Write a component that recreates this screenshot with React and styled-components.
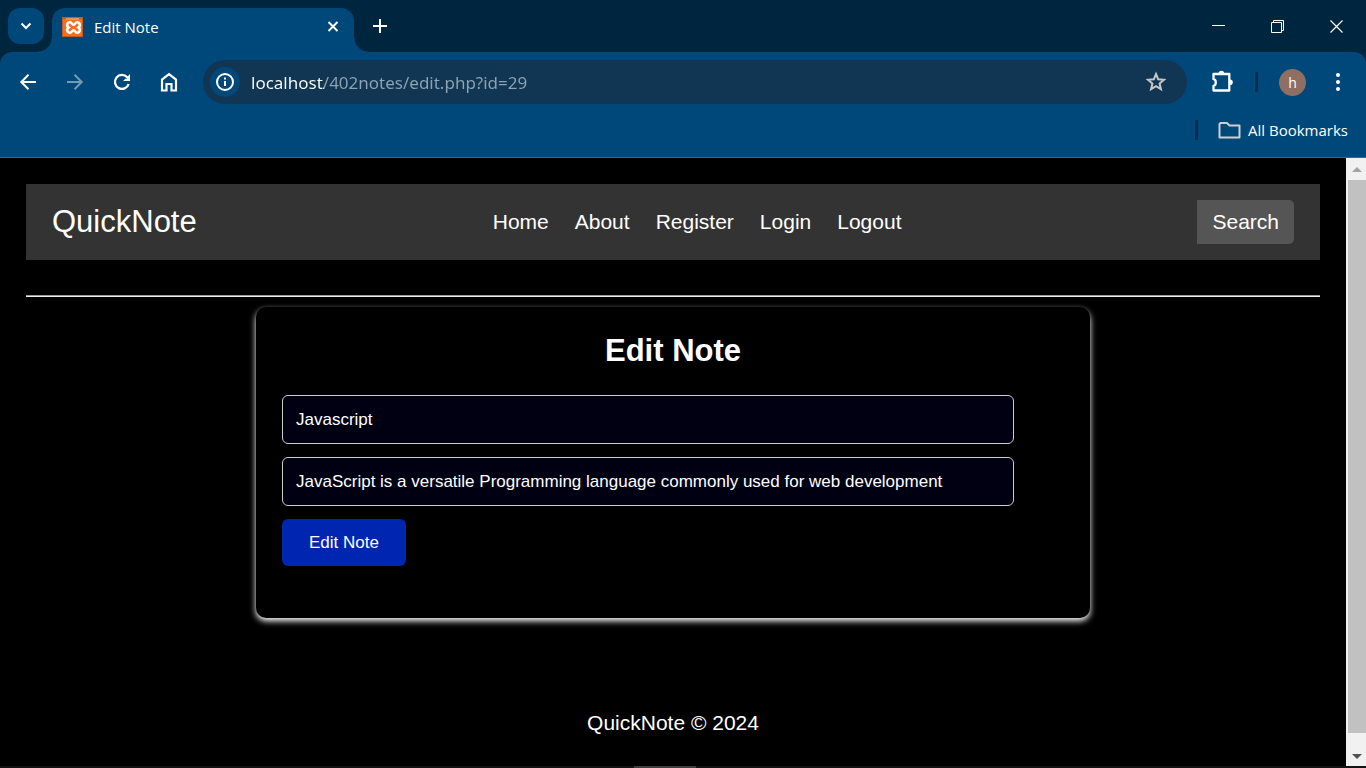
import React from "react";
import styled, { createGlobalStyle, css } from "styled-components";

const color = {
  frame: "#00253f",
  toolbar: "#00477a",
  omnibox: "#113654",
  separator: "#002c50",
  icon: "#ffffff",
};

const GlobalStyle = createGlobalStyle`
  *, *::before, *::after { box-sizing: border-box; }
  body { margin: 0; background: #000; color: #fff; }
  button, input { font: inherit; color: inherit; }
  button { border: 0; padding: 0; background: none; cursor: pointer; }
`;

const uiFont = css`
  font-family: "Open Sans", "Noto Sans", sans-serif;
`;

const Window = styled.div`
  display: flex;
  flex-direction: column;
  min-height: 100vh;
`;

/* ---------- browser frame ---------- */

const TabStrip = styled.div`
  ${uiFont}
  display: flex;
  height: 52px;
  padding: 8px 0 0 8px;
  background: ${color.frame};
`;

const TabSearch = styled.button`
  display: grid;
  place-items: center;
  width: 36px;
  height: 36px;
  margin-right: 8px;
  border-radius: 12px;
  background: ${color.toolbar};
`;

const Tab = styled.div`
  position: relative;
  display: flex;
  align-items: center;
  flex: 0 1 302px;
  height: 44px;
  padding: 0 10px 6px;
  border-radius: 13px 13px 0 0;
  background: ${color.toolbar};

  &::before,
  &::after {
    content: "";
    position: absolute;
    bottom: 0;
    width: 14px;
    height: 14px;
  }
  &::before {
    right: 100%;
    background: radial-gradient(circle at 0 0, transparent 13px, ${color.toolbar} 14px);
  }
  &::after {
    left: 100%;
    background: radial-gradient(circle at 100% 0, transparent 13px, ${color.toolbar} 14px);
  }
`;

const TabTitle = styled.span`
  flex: 1;
  margin-left: 11px;
  font-size: 15px;
  line-height: 20px;
`;

const SmallButton = styled.button`
  display: grid;
  place-items: center;
  width: 22px;
  height: 22px;
`;

const NewTab = styled.button`
  display: grid;
  place-items: center;
  width: 36px;
  height: 36px;
  margin-left: 8px;
`;

const WindowControls = styled.div`
  display: flex;
  margin-left: auto;
`;

const WindowButton = styled.button`
  display: grid;
  place-items: center;
  width: 59px;
  height: 36px;
`;

const ToolbarFrame = styled.div`
  background: ${color.frame};
`;

const Toolbar = styled.div`
  ${uiFont}
  display: flex;
  align-items: center;
  height: 60px;
  padding: 0 16px 0 4px;
  border-radius: 12px 12px 0 0;
  background: ${color.toolbar};
`;

const ToolButton = styled.button`
  display: grid;
  place-items: center;
  flex: none;
  width: ${(p) => p.$width || 47}px;
  height: 36px;
  opacity: ${(p) => (p.disabled ? 0.45 : 1)};
`;

const Omnibox = styled.div`
  display: flex;
  align-items: center;
  flex: 1;
  height: 44px;
  margin: 0 16px 0 11px;
  padding: 0 16px 0 7px;
  border-radius: 22px;
  background: ${color.omnibox};
`;

const SiteInfo = styled.button`
  display: grid;
  place-items: center;
  width: 30px;
  height: 30px;
  border-radius: 50%;
  background: ${color.toolbar};
`;

const UrlInput = styled.input`
  flex: 1;
  min-width: 0;
  height: 28px;
  margin-left: 11px;
  padding: 0;
  border: 0;
  outline: 0;
  font-family: "Noto Sans", sans-serif;
  font-size: 17px;
  background: linear-gradient(to right, #ffffff 73px, #8fa3b3 73px);
  background-clip: text;
  -webkit-text-fill-color: transparent;
`;

const Separator = styled.span`
  width: 3px;
  height: 20px;
  border-radius: 1px;
  background: ${color.separator};
`;

const Avatar = styled.button`
  width: 27px;
  height: 27px;
  margin: 0 20px 0 21px;
  border-radius: 50%;
  background: #8f6f63;
  font-size: 14px;
`;

const BookmarksBar = styled.div`
  ${uiFont}
  display: flex;
  align-items: center;
  justify-content: flex-end;
  height: 46px;
  padding: 0 18px 10px;
  border-bottom: 1px solid #2e6a9c;
  background: ${color.toolbar};
`;

const AllBookmarks = styled.button`
  display: flex;
  align-items: center;
  gap: 7px;
  margin-left: 19px;
  font-size: 15px;
  line-height: 20px;
`;

/* ---------- page ---------- */

const Viewport = styled.div`
  display: flex;
  flex: 1;
`;

const Page = styled.div`
  flex: 1;
  min-width: 0;
  padding: 26px;
  font-family: "Liberation Sans", Arial, sans-serif;
  font-size: 21px;
  line-height: 24px;
`;

const Header = styled.header`
  display: flex;
  align-items: center;
  justify-content: space-between;
  padding: 16px 26px;
  background: #333;
`;

const Brand = styled.a`
  color: #fff;
  font-size: 31px;
  line-height: 36px;
  text-decoration: none;
`;

const Nav = styled.nav`
  display: flex;
  gap: 26px;
`;

const NavLink = styled.a`
  color: #fff;
  text-decoration: none;
`;

const SearchButton = styled.button`
  height: 44px;
  padding: 0 15px;
  border-radius: 0 5px 5px 0;
  background: #555;
`;

const Rule = styled.hr`
  height: 2px;
  margin: 35px 0 10px;
  border: 0;
  border-top: 1px solid #9a9a9a;
  background: #eee;
`;

const Card = styled.main`
  max-width: 834px;
  margin: 0 auto;
  padding: 26px 26px 52px;
  border-radius: 10px;
  background: #000;
  box-shadow: 0 3px 6px #fff;
`;

const Title = styled.h1`
  margin: 0 0 26px;
  font-size: 31px;
  line-height: 36px;
  text-align: center;
`;

const Form = styled.form`
  display: flex;
  flex-direction: column;
  align-items: flex-start;
  gap: 13px;
  font-size: 17px;
`;

const Field = styled.input`
  box-sizing: content-box;
  width: 90%;
  height: 21px;
  padding: 13px;
  border: 1px solid #ccc;
  border-radius: 6px;
  background: #000013;
`;

const SubmitButton = styled.button`
  height: 47px;
  padding: 0 27px;
  border-radius: 6px;
  background: #0025b0;
`;

const Footer = styled.footer`
  margin-top: 93px;
  text-align: center;
`;

const ScrollTrack = styled.div`
  display: flex;
  flex-direction: column;
  width: 20px;
  padding-left: 2px;
  background: #f1f1f1;
`;

const ScrollThumb = styled.div`
  flex: 1;
  background: #c1c1c1;
`;

const ScrollArrow = styled.div`
  display: flex;
  justify-content: center;
  align-items: ${(p) => (p.$down ? "flex-end" : "center")};
  height: ${(p) => (p.$down ? 33 : 22)}px;
  padding-bottom: ${(p) => (p.$down ? 7 : 0)}px;
`;

const Taskbar = styled.div`
  height: 2px;
  padding-left: 46.4%;
  background: #141112;
`;

const ActiveApp = styled.div`
  width: 62px;
  height: 2px;
  background: #3f3f3f;
`;

const ToolbarSeparator = styled(Separator)`
  margin-left: 16px;
`;

function Icon({ size = 24, box = size, width = 2, children, stroke = color.icon }) {
  return (
    <svg width={size} height={size} viewBox={`0 0 ${box} ${box}`} fill="none" stroke={stroke} strokeWidth={width} aria-hidden="true">
      {children}
    </svg>
  );
}

function Favicon() {
  return (
    <svg width="21" height="20" viewBox="0 0 21 20" aria-hidden="true">
      <rect width="21" height="20" fill="#f37022" />
      <path d="M0 0H21V2H0Z" fill="#b8632f" />
      <path d="M4 1H17V3H4Z" fill="#e3935f" />
      <path d="M0 0H1V20H0ZM20 0H21V20H20ZM0 19H21V20H0Z" fill="#c9581c" />
      <path
        d="M8 5.200C5 5.200 4.200 8.800 6.600 10.500C4.200 12.200 5 15.800 8 15.800C10 15.800 9.800 13.200 11.500 13.200C13.200 13.200 13 15.800 15 15.800C18 15.800 18.800 12.200 16.400 10.500C18.800 8.800 18 5.200 15 5.200C13 5.200 13.200 7.800 11.500 7.800C9.800 7.800 10 5.200 8 5.200Z"
        fill="none"
        stroke="#fff"
        strokeWidth="2.600"
      />
    </svg>
  );
}

export default function App() {
  return (
    <Window>
      <GlobalStyle />
      <TabStrip>
        <TabSearch aria-label="Search tabs">
          <Icon size={12}>
            <path d="M1.500 3.500L6 8L10.500 3.500" />
          </Icon>
        </TabSearch>
        <Tab>
          <Favicon />
          <TabTitle>Edit Note</TabTitle>
          <SmallButton aria-label="Close tab">
            <Icon size={12}>
              <path d="M1.500 1L10.500 10M10.500 1L1.500 10" />
            </Icon>
          </SmallButton>
        </Tab>
        <NewTab aria-label="New tab">
          <Icon size={14}>
            <path d="M7 0V14M0 7H14" />
          </Icon>
        </NewTab>
        <WindowControls>
          <WindowButton aria-label="Minimize">
            <Icon size={13} width={1}>
              <path d="M0 5.500H13" />
            </Icon>
          </WindowButton>
          <WindowButton aria-label="Restore">
            <Icon size={13} width={1}>
              <path d="M0.500 2.500H10.500V12.500H0.500ZM2.500 2.500V0.500H12.500V10.500H10.500" />
            </Icon>
          </WindowButton>
          <WindowButton aria-label="Close">
            <Icon size={13} width={1.2}>
              <path d="M0.500 0.500L12.500 12.500M12.500 0.500L0.500 12.500" />
            </Icon>
          </WindowButton>
        </WindowControls>
      </TabStrip>

      <ToolbarFrame>
        <Toolbar>
          <ToolButton aria-label="Back">
            <Icon size={18}>
              <path d="M17 9H3M9.500 1.800L2.300 9L9.500 16.200" />
            </Icon>
          </ToolButton>
          <ToolButton aria-label="Forward" disabled>
            <Icon size={18}>
              <path d="M1 9H15M8.500 1.800L15.700 9L8.500 16.200" />
            </Icon>
          </ToolButton>
          <ToolButton aria-label="Reload">
            <Icon size={18} width={2.3}>
              <path d="M15.700 11A7 7 0 1 1 14.200 4.200L16 6" />
              <path d="M17 1V8H10L12.500 5.700H14.800V3.200Z" fill="#fff" stroke="none" />
            </Icon>
          </ToolButton>
          <ToolButton aria-label="Home">
            <Icon size={20} width={2.2}>
              <path d="M3 18.500V7.500L10 2.200L17 7.500V18.500H12.500V12H7.500V18.500Z" />
            </Icon>
          </ToolButton>
          <Omnibox>
            <SiteInfo aria-label="View site information">
              <Icon size={18}>
                <circle cx="9" cy="9" r="8" />
                <path d="M9 8V13M9 4.500V6.500" />
              </Icon>
            </SiteInfo>
            <UrlInput aria-label="Address" defaultValue="localhost/402notes/edit.php?id=29" />
            <ToolButton $width={30} aria-label="Bookmark this tab">
              <Icon size={22} stroke="#c7c7c7">
                <path d="M11 3L13.200 8.300L19 8.800L14.600 12.600L15.900 18.200L11 15.200L6.100 18.200L7.400 12.600L3 8.800L8.800 8.300Z" />
              </Icon>
            </ToolButton>
          </Omnibox>
          <ToolButton $width={36} aria-label="Extensions">
            <Icon size={24} width={2.3}>
              <path d="M4.500 4H20.300V20.500H4.500V15.800C7.500 15.500 7.500 9.500 4.500 9.200Z" strokeLinejoin="round" />
              <path d="M9.600 3.500A2.800 2.800 0 0 1 15.200 3.500ZM21 9.500A2.800 2.800 0 0 1 21 15.100Z" fill="#fff" stroke="none" />
            </Icon>
          </ToolButton>
          <ToolbarSeparator />
          <Avatar aria-label="Profile">h</Avatar>
          <ToolButton $width={24} aria-label="Menu">
            <svg width="6" height="20" viewBox="0 0 6 20" fill="#fff" aria-hidden="true">
              <circle cx="3" cy="3" r="2" />
              <circle cx="3" cy="10" r="2" />
              <circle cx="3" cy="17" r="2" />
            </svg>
          </ToolButton>
        </Toolbar>
      </ToolbarFrame>
      <BookmarksBar>
        <Separator />
        <AllBookmarks>
          <Icon size={24} stroke="#cfcfcf">
            <path d="M3.500 5H10L12.500 7.500H22.500V19.500H2.500V6Z" strokeLinejoin="round" />
          </Icon>
          All Bookmarks
        </AllBookmarks>
      </BookmarksBar>

      <Viewport>
        <Page>
          <Header>
            <Brand href="#">QuickNote</Brand>
            <Nav>
              {["Home", "About", "Register", "Login", "Logout"].map((label) => (
                <NavLink key={label} href="#">
                  {label}
                </NavLink>
              ))}
            </Nav>
            <SearchButton>Search</SearchButton>
          </Header>
          <Rule />
          <Card>
            <Title>Edit Note</Title>
            <Form onSubmit={(e) => e.preventDefault()}>
              <Field aria-label="Title" defaultValue="Javascript" />
              <Field
                aria-label="Content"
                defaultValue="JavaScript is a versatile Programming language commonly used for web development"
              />
              <SubmitButton type="submit">Edit Note</SubmitButton>
            </Form>
          </Card>
          <Footer>QuickNote © 2024</Footer>
        </Page>
        <ScrollTrack>
          <ScrollArrow>
            <svg width="10" height="5" viewBox="0 0 10 5" aria-hidden="true">
              <path d="M0 5L5 0L10 5Z" fill="#a3a3a3" />
            </svg>
          </ScrollArrow>
          <ScrollThumb />
          <ScrollArrow $down>
            <svg width="10" height="5" viewBox="0 0 10 5" aria-hidden="true">
              <path d="M0 0L5 5L10 0Z" fill="#505050" />
            </svg>
          </ScrollArrow>
        </ScrollTrack>
      </Viewport>
      <Taskbar>
        <ActiveApp />
      </Taskbar>
    </Window>
  );
}
